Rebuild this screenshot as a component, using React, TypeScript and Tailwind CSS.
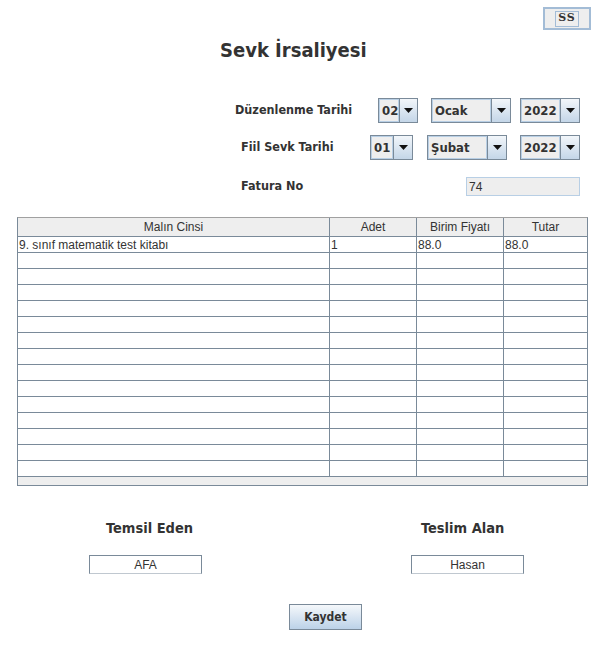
import React from "react"

const LABEL = "font-['DejaVu_Sans_Condensed','DejaVu_Sans',sans-serif] font-bold text-[#333333]"
const CELL = "font-['Liberation_Sans',Arial,sans-serif] text-[12px] text-[#333333]"

function Arrow() {
  return (
    <svg width="9" height="5" viewBox="0 0 9 5">
      <path d="M0 0 L9 0 L4.5 5 Z" fill="#111" />
    </svg>
  )
}

function Combo({ value, width }: { value: string; width: string }) {
  return (
    <div className={`${width} h-[25px] flex border border-[#7a8a99] bg-[#eeeeee]`}>
      <div className="flex-1 flex items-center pl-[2px] border border-[#b8cfe5] bg-[#eeeeee]">
        <span className={`${LABEL} text-[13px] leading-none`}>{value}</span>
      </div>
      <div className="w-[19px] flex items-center justify-center border-l border-[#7a8a99] bg-gradient-to-b from-[#f2f6fa] to-[#c4d6e8]">
        <Arrow />
      </div>
    </div>
  )
}

const columns = [
  { title: "Malın Cinsi", w: "w-[312px]" },
  { title: "Adet", w: "w-[87px]" },
  { title: "Birim Fiyatı", w: "w-[87px]" },
  { title: "Tutar", w: "flex-1" },
]

const rows: string[][] = [["9. sınıf matematik test kitabı", "1", "88.0", "88.0"]]
while (rows.length < 15) rows.push(["", "", "", ""])

export default function App() {
  return (
    <div className="w-[604px] h-[647px] bg-white overflow-hidden">
      {/* SS button */}
      <div className="flex justify-end pt-[7px] pr-[13px]">
        <div className="w-[48px] h-[23px] border-2 border-[#a3bcd6] bg-[#eeeeee] flex items-center justify-center">
          <div className="px-[2px] h-[16px] border border-[#a3bcd6] flex items-center">
            <span className="font-['DejaVu_Serif',serif] font-bold text-[11px] text-[#333] tracking-[1px]">SS</span>
          </div>
        </div>
      </div>

      {/* Title */}
      <div className="pl-[220px] mt-[5px] h-[30px] flex items-center">
        <span className={`${LABEL} text-[20px]`}>Sevk İrsaliyesi</span>
      </div>

      {/* Düzenlenme Tarihi */}
      <div className="flex items-center mt-[33px] pl-[235px]">
        <span className={`${LABEL} text-[12.5px] w-[143px]`}>Düzenlenme Tarihi</span>
        <Combo value="02" width="w-[40px]" />
        <div className="w-[13px]" />
        <Combo value="Ocak" width="w-[80px]" />
        <div className="w-[9px]" />
        <Combo value="2022" width="w-[60px]" />
      </div>

      {/* Fiil Sevk Tarihi */}
      <div className="flex items-center mt-[12px] pl-[241px]">
        <span className={`${LABEL} text-[12.5px] w-[129px]`}>Fiil Sevk Tarihi</span>
        <Combo value="01" width="w-[43px]" />
        <div className="w-[14px]" />
        <Combo value="Şubat" width="w-[80px]" />
        <div className="w-[13px]" />
        <Combo value="2022" width="w-[60px]" />
      </div>

      {/* Fatura No */}
      <div className="flex items-center mt-[17px] pl-[241px]">
        <span className={`${LABEL} text-[12.5px] w-[225px]`}>Fatura No</span>
        <div className="w-[114px] h-[19px] border border-[#b8cfe5] bg-[#eeeeee] flex items-center pl-[2px]">
          <span className={CELL}>74</span>
        </div>
      </div>

      {/* Table */}
      <div className="ml-[17px] mt-[21px] w-[571px] border border-[#7a8a99] border-t-[#a0a0a0] bg-[#eeeeee]">
        <div className="flex h-[19px] border-b border-[#7a8a99]">
          {columns.map((c, i) => (
            <div
              key={c.title}
              className={`${c.w} flex items-center justify-center ${i < 3 ? "border-r border-[#7a8a99]" : ""} bg-[#eeeeee]`}
            >
              <span className={CELL}>{c.title}</span>
            </div>
          ))}
        </div>
        {rows.map((r, ri) => (
          <div key={ri} className="flex h-[16px] border-b border-[#7a8a99] bg-white">
            {columns.map((c, i) => (
              <div
                key={c.title}
                className={`${c.w} flex items-center pl-[1px] ${i < 3 ? "border-r border-[#7a8a99]" : ""}`}
              >
                <span className={`${CELL} leading-none`}>{r[i]}</span>
              </div>
            ))}
          </div>
        ))}
        <div className="h-[8px] bg-[#eeeeee]" />
      </div>

      {/* Signatures */}
      <div className="flex mt-[33px]">
        <div className="ml-[89px] w-[113px] flex flex-col">
          <span className={`${LABEL} text-[14.5px] h-[20px] flex items-center whitespace-nowrap ml-[17px]`}>Temsil Eden</span>
          <div className="mt-[16px] w-[113px] h-[19px] border border-[#7a8a99] border-b-[#c0c8d0] flex items-center justify-center">
            <span className={CELL}>AFA</span>
          </div>
        </div>
        <div className="ml-[209px] w-[113px] flex flex-col">
          <span className={`${LABEL} text-[14.5px] h-[20px] flex items-center whitespace-nowrap ml-[10px]`}>Teslim Alan</span>
          <div className="mt-[16px] w-[113px] h-[19px] border border-[#7a8a99] border-b-[#c0c8d0] flex items-center justify-center">
            <span className={CELL}>Hasan</span>
          </div>
        </div>
      </div>

      {/* Kaydet */}
      <div className="flex pl-[289px] mt-[30px]">
        <button className="w-[73px] h-[26px] border border-[#7a8a99] bg-gradient-to-b from-[#f5f8fb] to-[#bcd2e8] flex items-center justify-center">
          <span className={`${LABEL} text-[12px]`}>Kaydet</span>
        </button>
      </div>
    </div>
  )
}
